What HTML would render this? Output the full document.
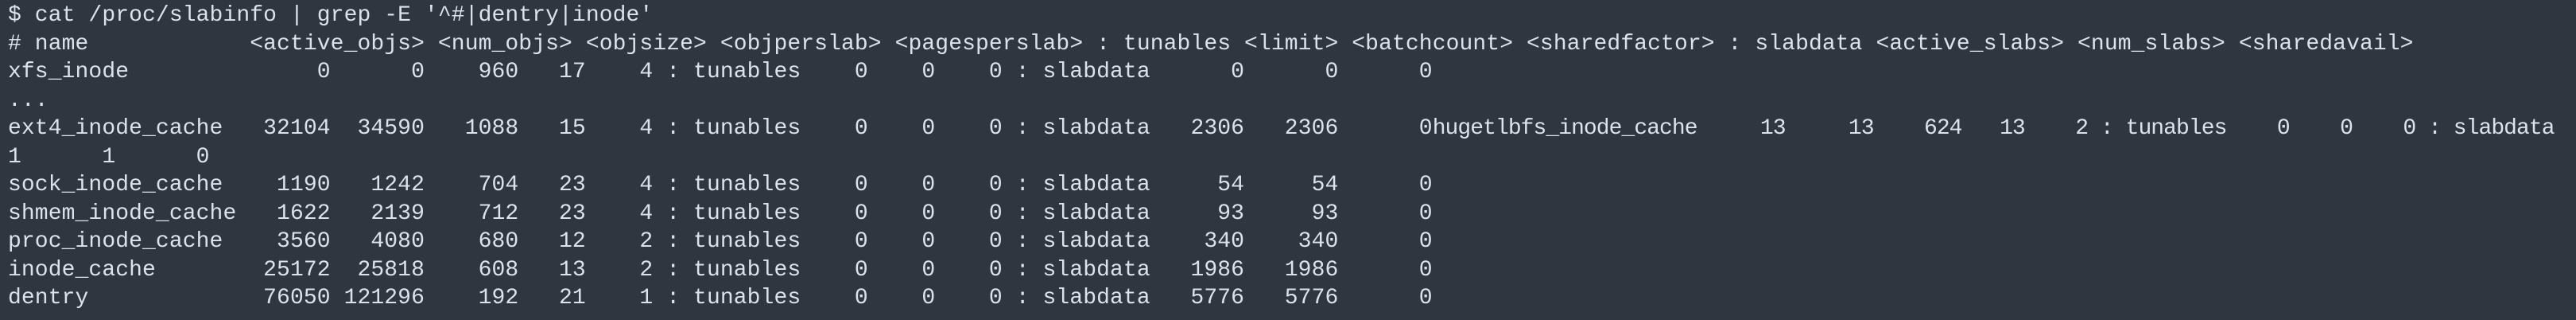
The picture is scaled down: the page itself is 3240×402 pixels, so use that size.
<!DOCTYPE html>
<html><head><meta charset="utf-8"><style>
html,body{margin:0;padding:0;}
body{width:3240px;height:402px;background:#2f3640;overflow:hidden;}
pre{margin:0;padding:2px 0 0 10px;font-family:"Liberation Mono","DejaVu Sans Mono",monospace;font-size:28px;line-height:35.5px;color:#dde2ea;white-space:pre;letter-spacing:0.1px;}
.c{letter-spacing:-0.95px;}
</style></head><body><pre>$ cat /proc/slabinfo | grep -E '^#|dentry|inode'
# name            &lt;active_objs&gt; &lt;num_objs&gt; &lt;objsize&gt; &lt;objperslab&gt; &lt;pagesperslab&gt; : tunables &lt;limit&gt; &lt;batchcount&gt; &lt;sharedfactor&gt; : slabdata &lt;active_slabs&gt; &lt;num_slabs&gt; &lt;sharedavail&gt;
xfs_inode              0      0    960   17    4 : tunables    0    0    0 : slabdata      0      0      0
...
ext4_inode_cache   32104  34590   1088   15    4 : tunables    0    0    0 : slabdata   2306   2306      0<span class="c">hugetlbfs_inode_cache     13     13    624   13    2 : tunables    0    0    0 : slabdata</span>
1      1      0
sock_inode_cache    1190   1242    704   23    4 : tunables    0    0    0 : slabdata     54     54      0
shmem_inode_cache   1622   2139    712   23    4 : tunables    0    0    0 : slabdata     93     93      0
proc_inode_cache    3560   4080    680   12    2 : tunables    0    0    0 : slabdata    340    340      0
inode_cache        25172  25818    608   13    2 : tunables    0    0    0 : slabdata   1986   1986      0
dentry             76050 121296    192   21    1 : tunables    0    0    0 : slabdata   5776   5776      0
</pre></body></html>
